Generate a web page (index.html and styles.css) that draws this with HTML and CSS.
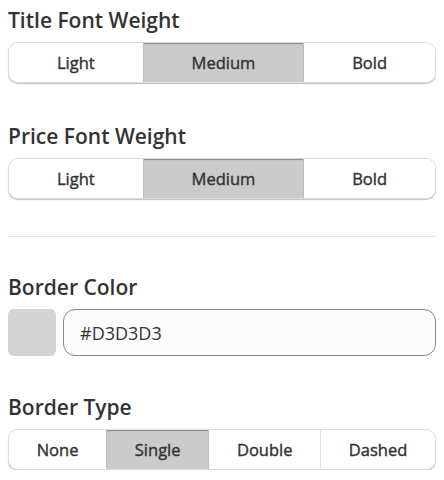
FILE: index.html
```html
<!DOCTYPE html>
<html>
<head>
<meta charset="utf-8">
<link rel="stylesheet" href="styles.css">
</head>
<body>
<div class="panel">
  <div class="field">
    <div class="label">Title Font Weight</div>
    <div class="seg">
      <button class="seg-btn">Light</button>
      <button class="seg-btn active">Medium</button>
      <button class="seg-btn">Bold</button>
    </div>
  </div>
  <div class="field">
    <div class="label">Price Font Weight</div>
    <div class="seg">
      <button class="seg-btn">Light</button>
      <button class="seg-btn active">Medium</button>
      <button class="seg-btn">Bold</button>
    </div>
  </div>
  <hr class="divider">
  <div class="field field-color">
    <div class="label">Border Color</div>
    <div class="color-row">
      <div class="swatch"></div>
      <input class="color-input" type="text" value="#D3D3D3">
    </div>
  </div>
  <div class="field field-last">
    <div class="label">Border Type</div>
    <div class="seg">
      <button class="seg-btn">None</button>
      <button class="seg-btn active">Single</button>
      <button class="seg-btn">Double</button>
      <button class="seg-btn">Dashed</button>
    </div>
  </div>
</div>
</body>
</html>
```
FILE: styles.css
```css
* { box-sizing: border-box; }
body {
  margin: 0;
  background: #fff;
  font-family: "Open Sans", "Noto Sans", sans-serif;
  color: #333;
}
.panel {
  padding: 6px 8px 0 8px;
  width: 444px;
}
.field {
  margin-bottom: 39px;
}
.field-color {
  margin-bottom: 37px;
}
.field-last {
  margin-bottom: 0;
}
.label {
  font-size: 21px;
  font-weight: 600;
  line-height: 28px;
  margin-bottom: 8px;
  color: #333;
}
.seg {
  display: flex;
  height: 41px;
  border: 1px solid #dcdcdc;
  border-radius: 10px;
  overflow: hidden;
  box-shadow: 0 1px 1px rgba(0,0,0,0.25);
  background: #fff;
}
.seg-btn {
  flex: 1 1 auto;
  border: none;
  border-left: 1px solid #e2e2e2;
  background: #fff;
  font-family: inherit;
  font-size: 16.5px;
  font-weight: 400;
  -webkit-text-stroke: 0.4px #333;
  color: #333;
  padding: 0 8px;
  margin: 0;
}
.seg-btn:first-child { border-left: none; }
.seg-btn.active {
  background: #cbcbcb;
  box-shadow: inset 0 2px 1px -1px rgba(0,0,0,0.35);
  border-left-color: #bdbdbd;
}
.seg-btn.active + .seg-btn { border-left-color: #bdbdbd; }
.divider {
  border: none;
  border-top: 1px solid #e6e6e6;
  margin: -2px 0 36px 0;
}
.color-row {
  display: flex;
  gap: 7px;
  align-items: stretch;
}
.swatch {
  width: 48px;
  height: 47px;
  border-radius: 6px;
  background: #d3d3d3;
  flex: none;
}
.color-input {
  flex: 1;
  min-width: 0;
  height: 47px;
  border: 1px solid #888;
  border-radius: 12px;
  background: #fcfcfc;
  font-family: inherit;
  font-size: 18px;
  color: #333;
  padding: 0 16px;
}
```
